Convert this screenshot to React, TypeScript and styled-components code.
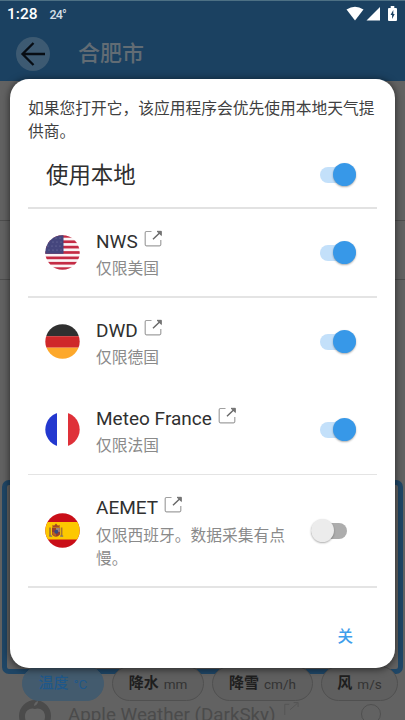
import React from "react";
import styled, { createGlobalStyle } from "styled-components";

const Global = createGlobalStyle`
  * { box-sizing: border-box; }
  body { margin: 0; background: #626262; font-family: Roboto, "Noto Sans CJK SC", sans-serif; overflow: hidden; }
`;

const Screen = styled.div`
  position: relative;
  width: 405px;
  height: 720px;
  overflow: hidden;
  display: flex;
  flex-direction: column;
  background: #626262;
`;

const Header = styled.header`
  height: 81px;
  flex: none;
  background: #1b4161;
  border-top: 1px solid #4d7084;
`;

const StatusBar = styled.div`
  height: 26px;
  display: flex;
  align-items: center;
  padding: 0 7px;
  color: #fff;
  font-size: 15.5px;
  font-weight: 500;
`;

const Temp = styled.span`
  margin-left: 12px;
  font-size: 12.5px;
  letter-spacing: -0.8px;
  color: #d5dee5;
`;

const StatusIcons = styled.div`
  margin-left: auto;
  height: 18px;
  display: flex;
`;

const Toolbar = styled.div`
  display: flex;
  align-items: center;
  height: 54px;
  padding-left: 16px;
  gap: 28px;
`;

const BackButton = styled.div`
  width: 34px;
  height: 34px;
  border-radius: 50%;
  background: #3d5a72;
  display: flex;
`;

const City = styled.div`
  font-size: 22px;
  line-height: 32px;
  color: #626c74;
  font-weight: 500;
`;

const PageRow = styled.div<{ $h: number }>`
  height: ${(p) => p.$h}px;
  flex: none;
  border-bottom: 1px solid #4e4e4e;
`;

const Highlight = styled.div`
  flex: none;
  height: 194px;
  margin: 200px 2px 0 2px;
  border: 5px solid #1f4666;
  border-radius: 7px;
`;

const Chips = styled.div`
  display: flex;
  flex: none;
  gap: 8px;
  margin: -8px 0 0 22px;
  position: relative;
`;

const Chip = styled.div<{ $w: number; $on?: boolean }>`
  width: ${(p) => p.$w}px;
  height: 35px;
  flex: none;
  border: 1px solid ${(p) => (p.$on ? "#435b6e" : "#505050")};
  border-radius: 18px;
  background: ${(p) => (p.$on ? "#435b6e" : "#5f5f5f")};
  color: ${(p) => (p.$on ? "#1f588a" : "#1e1e1e")};
  display: flex;
  align-items: center;
  justify-content: center;
  gap: 5px;
  font-size: 15px;
  font-weight: ${(p) => (p.$on ? 500 : 700)};
  padding-bottom: 4px;
`;

const Unit = styled.small<{ $on?: boolean }>`
  font-size: 13.5px;
  font-weight: 400;
  padding-top: 4px;
  color: ${(p) => (p.$on ? "#1f588a" : "#333")};
`;

const Provider = styled.div`
  display: flex;
  flex: none;
  align-items: flex-start;
  height: 32px;
  margin: -3px 20px 0 17px;
  color: #4b4b4b;
  font-size: 18.8px;
`;

const ProviderName = styled.span`
  margin: 7px 7px 0 15px;
  line-height: 20px;
`;

const Radio = styled.div`
  width: 20px;
  height: 20px;
  border: 1px solid #505050;
  border-radius: 50%;
  margin: 6px 4px 0 auto;
`;

const Dialog = styled.section`
  position: absolute;
  left: 10px;
  top: 79px;
  width: 385px;
  height: 589px;
  border-radius: 19px;
  background: #fff;
  box-shadow: 0 1px 7px 1px rgba(0, 0, 0, 0.5);
  padding: 18px 18px 0;
  display: flex;
  flex-direction: column;
`;

const Message = styled.div`
  height: 45px;
  font-size: 15.75px;
  line-height: 23px;
  color: #3f3f3f;
  white-space: nowrap;
`;

const MainSetting = styled.div`
  display: flex;
  align-items: center;
  justify-content: space-between;
  height: 67px;
  padding: 0 21px 0 18px;
  border-bottom: 2px solid #e2e2e2;
  font-size: 22.4px;
  line-height: 30px;
  color: #2f2f2f;
`;

const Source = styled.div<{ $h: number; $line?: number }>`
  display: flex;
  align-items: center;
  height: ${(p) => p.$h}px;
  padding: 0 21px 0 17px;
  border-bottom: ${(p) => p.$line ?? 0}px solid #e4e4e4;
`;

const Copy = styled.div`
  margin-left: 16px;
  width: 205px;
  padding-top: 2px;
`;

const Name = styled.div`
  display: flex;
  align-items: center;
  gap: 6px;
  height: 28px;
  font-size: 19px;
  letter-spacing: 0.02px;
  color: #303030;
  svg { margin-top: -5px; }
`;

const Note = styled.div`
  font-size: 15.75px;
  line-height: 23px;
  padding-top: 2px;
  color: #8a8a8a;
  white-space: nowrap;
`;

const Track = styled.div<{ $on?: boolean }>`
  width: 36px;
  height: 16px;
  border-radius: 8px;
  margin-left: auto;
  display: flex;
  align-items: center;
  justify-content: ${(p) => (p.$on ? "flex-end" : "flex-start")};
  margin-right: ${(p) => (p.$on ? 0 : 9)}px;
  background: ${(p) => (p.$on ? "#c3e0fa" : "#adadad")};
`;

const Knob = styled.div<{ $on?: boolean }>`
  width: 23px;
  height: 23px;
  flex: none;
  border-radius: 50%;
  background: ${(p) => (p.$on ? "#3798e8" : "#ececec")};
  box-shadow: 0 1px 2px rgba(0, 0, 0, 0.32);
`;

const Actions = styled.div`
  display: flex;
  justify-content: flex-end;
  padding: 37px 24px 0 0;
  font-size: 15.5px;
  line-height: 24px;
  font-weight: 500;
  color: #3e9eeb;
`;

function Switch({ on }: { on?: boolean }) {
  return (
    <Track $on={on}>
      <Knob $on={on} />
    </Track>
  );
}

function LinkIcon() {
  return (
    <svg width="19" height="18" viewBox="0 0 19 18" fill="none">
      <path d="M7.5 1.5H2.4q-1.2 0-1.2 1.2v11.9q0 1.2 1.2 1.2h13.2q1.2 0 1.2-1.2V10" stroke="#a0a0a0" strokeWidth="1.2" />
      <path d="M9 9.3 16.6 1.9" stroke="#666" strokeWidth="1.4" />
      <path d="M13 1.3H17.4V5.5z" stroke="#666" strokeWidth="0.8" fill="#777" />
    </svg>
  );
}

type Country = "us" | "de" | "fr" | "es";

function Flag({ country }: { country: Country }) {
  return (
    <svg width="35" height="35" viewBox="0 0 35 35">
      <defs>
        <clipPath id={`round-${country}`}>
          <circle cx="17.5" cy="17.5" r="17.2" />
        </clipPath>
      </defs>
      <g clipPath={`url(#round-${country})`}>
        {country === "us" && (
          <>
            <rect width="35" height="35" fill="#fbf4f5" />
            {[0, 1, 2, 3, 4, 5, 6].map((i) => (
              <rect key={i} y={i * 5.38} width="35" height="2.7" fill="#c42b44" />
            ))}
            <rect width="18.5" height="18.8" fill="#45467d" />
            {[3, 7, 11, 15].map((y, r) =>
              [3, 7, 11, 15].map((x) => (
                <circle key={`${x}-${y}`} cx={x + (r % 2)} cy={y} r="0.55" fill="#7f80aa" />
              ))
            )}
          </>
        )}
        {country === "de" && (
          <>
            <rect width="35" height="12.2" fill="#303030" />
            <rect y="12.2" width="35" height="11.5" fill="#cf282a" />
            <rect y="23.7" width="35" height="12" fill="#fda82b" />
          </>
        )}
        {country === "fr" && (
          <>
            <rect width="35" height="35" fill="#fff" />
            <rect width="12" height="35" fill="#2338cf" />
            <rect x="23" width="12" height="35" fill="#df3139" />
          </>
        )}
        {country === "es" && (
          <>
            <rect width="35" height="35" fill="#c90e18" />
            <rect y="9" width="35" height="17.5" fill="#fdc800" />
            <path d="M5 14.5v8.5M16.6 14.5v8.5" stroke="#a8752f" strokeWidth="1.7" />
            <path d="M4.2 23.2h3M15.2 23.2h3" stroke="#777273" strokeWidth="1.3" />
            <path d="M7 14.5h8v7q-4 4.4-8 0z" fill="#963f30" />
            <path d="M11 15h3.8v4H11z" fill="#9e837b" />
            <path d="M7.3 19H11v4q-3-.2-3.7-2z" fill="#b85f22" />
            <circle cx="11.3" cy="18.7" r="2" fill="#384a80" />
            <path d="M7.5 14.3V11.7l1.5 1L11 10.5l2 2.2 1.6-1v2.6z" fill="#a54726" />
          </>
        )}
      </g>
    </svg>
  );
}

const sources: { country: Country; name: string; note: React.ReactNode; on: boolean; h: number; line?: number }[] = [
  { country: "us", name: "NWS", note: "仅限美国", on: true, h: 89, line: 2 },
  { country: "de", name: "DWD", note: "仅限德国", on: true, h: 87 },
  { country: "fr", name: "Meteo France", note: "仅限法国", on: true, h: 90, line: 1 },
  { country: "es", name: "AEMET", note: <>仅限西班牙。数据采集有点<br />慢。</>, on: false, h: 113, line: 2 },
];

export default function App() {
  return (
    <>
      <Global />
      <Screen>
        <Header>
          <StatusBar>
            <span>1:28</span>
            <Temp>24°</Temp>
            <StatusIcons>
              <svg width="52" height="18" viewBox="0 0 52 18">
                <path d="M.5 4.6Q9 -1.2 17.5 4.6L9 15.5z" fill="#fff" />
                <path d="M20.5 15.5H34V2z" fill="#fff" />
                <path d="M43 3h1.7V1h3.6v2H50q1 0 1 1v11q0 1-1 1h-7q-1 0-1-1V4q0-1 1-1z" fill="#fff" />
                <path d="M47.3 5 44.5 10h1.6v4l2.6-5h-1.4z" fill="#1b4161" />
              </svg>
            </StatusIcons>
          </StatusBar>
          <Toolbar>
            <BackButton>
              <svg width="34" height="34" viewBox="0 0 34 34" fill="none" stroke="#070d14" strokeWidth="2.3">
                <path d="M29 17H7M17.5 6 6.5 17l11 11" />
              </svg>
            </BackButton>
            <City>合肥市</City>
          </Toolbar>
        </Header>
        <PageRow $h={140} />
        <PageRow $h={59} />
        <Highlight />
        <Chips>
          <Chip $w={82} $on>温度 <Unit $on>°C</Unit></Chip>
          <Chip $w={92}>降水 <Unit>mm</Unit></Chip>
          <Chip $w={101}>降雪 <Unit>cm/h</Unit></Chip>
          <Chip $w={77}>风 <Unit>m/s</Unit></Chip>
        </Chips>
        <Provider>
          <svg width="36" height="36" viewBox="0 0 36 36">
            <circle cx="18" cy="18" r="16" fill="#4b4b4b" />
            <path d="M18 11c-4-2-10 1-10 7s3 12 8 12h4c5 0 8-6 8-12s-6-9-10-7z" fill="#646464" />
            <path d="M17 8q0-4 4-5q0 4-4 5z" fill="#646464" />
          </svg>
          <ProviderName>Apple Weather (DarkSky)</ProviderName>
          <svg width="16" height="18" viewBox="0 0 18 18" fill="none" stroke="#545454">
            <path d="M7 6H2v12M8 12l8-7M12 4h5v5" />
          </svg>
          <Radio />
        </Provider>
        <Dialog>
          <Message>如果您打开它，该应用程序会优先使用本地天气提<br />供商。</Message>
          <MainSetting>
            <span>使用本地</span>
            <Switch on />
          </MainSetting>
          {sources.map((s) => (
            <Source key={s.country} $h={s.h} $line={s.line}>
              <Flag country={s.country} />
              <Copy>
                <Name>{s.name}<LinkIcon /></Name>
                <Note>{s.note}</Note>
              </Copy>
              <Switch on={s.on} />
            </Source>
          ))}
          <Actions>关</Actions>
        </Dialog>
      </Screen>
    </>
  );
}
